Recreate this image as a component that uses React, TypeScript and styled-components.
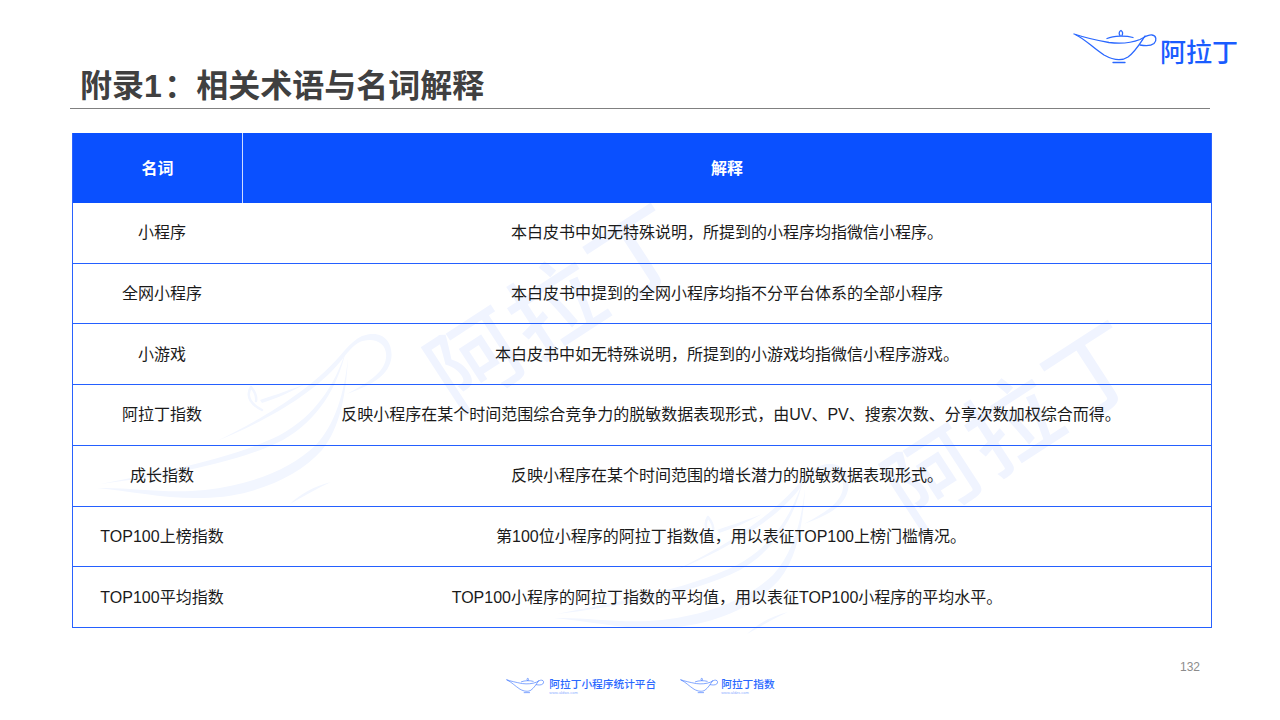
import React from "react";
import styled, { createGlobalStyle } from "styled-components";

const Global = createGlobalStyle`
  html, body { margin: 0; padding: 0; background: #fff; }
  body { font-family: "Liberation Sans", "Noto Sans CJK SC", sans-serif; }
`;

const Slide = styled.div`
  position: relative;
  width: 1280px;
  height: 720px;
  overflow: hidden;
  background: #fff;
`;

const Header = styled.header`
  position: relative;
  z-index: 1;
  box-sizing: border-box;
  width: 1140px;
  height: 109px;
  margin-left: 70px;
  padding: 0 0 0 10px;
  border-bottom: 1px solid #808080;
  display: flex;
  justify-content: space-between;
`;

const Title = styled.h1`
  margin: 64px 0 0;
  font-size: 32px;
  line-height: 44px;
  font-weight: 700;
  color: #404040;
  white-space: nowrap;
`;

const TitleNumber = styled.span`
  letter-spacing: 2.5px;
`;

const Brand = styled.div`
  display: flex;
  align-items: flex-start;
  margin: 28px -28px 0 0;
  gap: 1px;
`;

const BrandName = styled.span`
  font-family: "Noto Sans CJK SC", sans-serif;
  font-size: 26px;
  line-height: 30px;
  font-weight: 500;
  color: #1a5cff;
  margin-top: 8px;
`;

const Table = styled.div`
  position: relative;
  z-index: 1;
  box-sizing: border-box;
  width: 1140px;
  height: 495px;
  margin: 24px 0 0 72px;
  border: solid #2a62ff;
  border-width: 0 1px 0 1px;
  display: grid;
  grid-template-columns: 170px 1fr;
  grid-template-rows: 70px repeat(7, 1fr);
`;

const HeadCell = styled.div<{ $divider?: boolean }>`
  display: flex;
  align-items: center;
  justify-content: center;
  box-sizing: border-box;
  padding-bottom: 2px;
  background: #0a50ff;
  color: #fff;
  font-size: 16px;
  font-weight: 700;
  border-right: ${(p) => (p.$divider ? "1px solid #cfdcff" : "none")};
`;

const Cell = styled.div<{ $inset?: boolean }>`
  display: flex;
  align-items: center;
  justify-content: center;
  padding: 0 0 3px ${(p) => (p.$inset ? 8 : 0)}px;
  box-sizing: border-box;
  border-bottom: 1px solid #2460ff;
  color: #1a1a1a;
  font-size: 16px;
  white-space: nowrap;
`;

const WatermarkText = styled.span<{ $x: number; $y: number }>`
  position: absolute;
  left: ${(p) => p.$x}px;
  top: ${(p) => p.$y}px;
  z-index: 0;
  font-family: "Noto Sans CJK SC", sans-serif;
  font-size: 92px;
  line-height: 92px;
  font-weight: 500;
  letter-spacing: 4px;
  color: #f0f4ff;
  white-space: nowrap;
  transform: rotate(-33deg);
  transform-origin: center;
`;

const WatermarkLamp = styled.svg<{ $x: number; $y: number }>`
  position: absolute;
  left: ${(p) => p.$x}px;
  top: ${(p) => p.$y}px;
  z-index: 0;
`;

const PageNumber = styled.div`
  position: relative;
  z-index: 1;
  width: 1120px;
  margin: 32px 0 0 80px;
  text-align: right;
  font-size: 12px;
  line-height: 14px;
  color: #8c8c8c;
`;

const Footer = styled.footer`
  position: relative;
  z-index: 1;
  display: flex;
  justify-content: center;
  align-items: flex-start;
  gap: 24px;
  margin: 3px 0 0 1px;
`;

const FooterBrand = styled.div<{ $gap: number }>`
  display: flex;
  align-items: flex-start;
  gap: ${(p) => p.$gap}px;
`;

const FooterText = styled.div`
  display: flex;
  flex-direction: column;
  font-family: "Noto Sans CJK SC", sans-serif;
  color: #2a68ff;
`;

const FooterName = styled.span`
  font-size: 10.7px;
  line-height: 13px;
  font-weight: 500;
  white-space: nowrap;
`;

const FooterUrl = styled.span`
  font-family: "Liberation Sans", sans-serif;
  font-size: 4px;
  line-height: 5px;
  color: #8fb0ff;
`;

const Lamp = ({ w }: { w: number }) => (
  <svg width={w} height={(w * 38) / 86} viewBox="0 0 86 38">
    <g fill="none" stroke="#2a68ff" strokeWidth={1.3} strokeLinecap="round" strokeLinejoin="round">
      <path d="M1 6C10 9 22 12 36 14.500C47 16 58 15 67 11.500C72 9 75 6.500 79 7C83.500 7.500 84 12.500 81 15.500C78 18 72 18 67 17" />
      <path d="M3 7C12 11 20 20 31 27C40 32 49 33 55 29C62 24 66 17 72 8" />
      <path d="M34 10.500C41 7.500 53 7.500 60 9.500" />
      <path d="M47 7.500C45 5 47 3 48 2.500C49.500 3.500 50 5.500 49 7.500" />
      <path d="M40 34.500H52" />
    </g>
  </svg>
);

const BigLamp = ({ x, y }: { x: number; y: number }) => (
  <WatermarkLamp $x={x} $y={y} width={310} height={185} viewBox="90 330 310 185">
    <g fill="#f2f6ff">
      <path d="M97 488C130 491 165 499 203 498C252 497 297 478 322 450C340 428 346 395 348 358C344 395 335 424 316 445C290 470 250 485 205 490C165 494 130 487 97 488Z" />
      <path d="M100 484C150 474 230 460 280 435C315 416 335 385 346 350C338 387 318 420 283 440C235 465 150 478 100 484Z" />
      <path d="M217 441C255 422 310 393 345 350C350 344 356 339 362 336C385 328 394 345 391 360C387 378 368 386 347 394C365 384 384 374 386 358C388 342 372 336 358 343C350 348 345 356 340 362C310 398 258 424 217 441Z" />
      <path d="M260 400C278 394 290 390 305 384C290 392 278 398 262 403Z" />
      <path d="M290 504C300 494 315 486 331 482C318 488 304 496 290 504Z" />
    </g>
    <path d="M251 387C245 397 252 405 262 410M251 387C255 392 257 396 256 401" fill="none" stroke="#f2f6ff" strokeWidth={2.5} strokeLinecap="round" />
  </WatermarkLamp>
);

const rows: { term: string; desc: string; shift?: boolean }[] = [
  { term: "小程序", desc: "本白皮书中如无特殊说明，所提到的小程序均指微信小程序。" },
  { term: "全网小程序", desc: "本白皮书中提到的全网小程序均指不分平台体系的全部小程序" },
  { term: "小游戏", desc: "本白皮书中如无特殊说明，所提到的小游戏均指微信小程序游戏。" },
  { term: "阿拉丁指数", desc: "反映小程序在某个时间范围综合竞争力的脱敏数据表现形式，由UV、PV、搜索次数、分享次数加权综合而得。", shift: true },
  { term: "成长指数", desc: "反映小程序在某个时间范围的增长潜力的脱敏数据表现形式。" },
  { term: "TOP100上榜指数", desc: "第100位小程序的阿拉丁指数值，用以表征TOP100上榜门槛情况。", shift: true },
  { term: "TOP100平均指数", desc: "TOP100小程序的阿拉丁指数的平均值，用以表征TOP100小程序的平均水平。" },
];

export default function App() {
  return (
    <Slide>
      <Global />
      <WatermarkText $x={410} $y={255}>阿拉丁</WatermarkText>
      <WatermarkText $x={867} $y={372}>阿拉丁</WatermarkText>
      <BigLamp x={90} y={330} />
      <BigLamp x={547} y={460} />
      <Header>
        <Title>附录<TitleNumber>1</TitleNumber>：相关术语与名词解释</Title>
        <Brand>
          <Lamp w={86} />
          <BrandName>阿拉丁</BrandName>
        </Brand>
      </Header>
      <Table>
        <HeadCell $divider>名词</HeadCell>
        <HeadCell>解释</HeadCell>
        {rows.map(({ term, desc, shift }) => (
          <React.Fragment key={term}>
            <Cell $inset>{term}</Cell>
            <Cell $inset={shift}>{desc}</Cell>
          </React.Fragment>
        ))}
      </Table>
      <PageNumber>132</PageNumber>
      <Footer>
        <FooterBrand $gap={4}>
          <Lamp w={39} />
          <FooterText>
            <FooterName>阿拉丁小程序统计平台</FooterName>
            <FooterUrl>www.aldwx.com</FooterUrl>
          </FooterText>
        </FooterBrand>
        <FooterBrand $gap={2}>
          <Lamp w={39} />
          <FooterText>
            <FooterName>阿拉丁指数</FooterName>
            <FooterUrl>www.aldzs.com</FooterUrl>
          </FooterText>
        </FooterBrand>
      </Footer>
    </Slide>
  );
}
